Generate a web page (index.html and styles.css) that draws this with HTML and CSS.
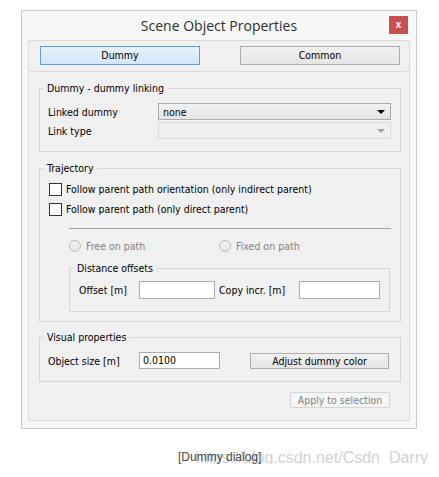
FILE: index.html
```html
<!DOCTYPE html>
<html>
<head>
<meta charset="utf-8">
<link rel="stylesheet" href="styles.css">
</head>
<body>
<div class="window">
  <div class="titlebar">
    <span></span>
    <div class="title">Scene Object Properties</div>
    <div class="close">x</div>
  </div>
  <div class="panel">
    <div class="tabs">
      <div class="btn tab active">Dummy</div>
      <div class="btn tab">Common</div>
    </div>
    <div class="content">
      <div class="group g1">
        <div class="gtitle">Dummy - dummy linking</div>
        <div class="row r17 first9"><span class="lbl w110">Linked dummy</span><div class="combo"><span>none</span><span class="arrow"></span></div></div>
        <div class="row r17 mt2"><span class="lbl w110">Link type</span><div class="combo disabled"><span></span><span class="arrow"></span></div></div>
      </div>

      <div class="group g2">
        <div class="gtitle">Trajectory</div>
        <div class="chk-row first5"><span class="chk"></span><span>Follow parent path orientation (only indirect parent)</span></div>
        <div class="chk-row"><span class="chk"></span><span>Follow parent path (only direct parent)</span></div>
        <div class="sep"></div>
        <div class="radio-row">
          <div class="radio-item"><span class="radio"></span><span>Free on path</span></div>
          <div class="radio-item"><span class="radio"></span><span>Fixed on path</span></div>
        </div>
        <div class="group g3">
          <div class="gtitle">Distance offsets</div>
          <div class="row r18 first7">
            <span class="lbl w60">Offset [m]</span>
            <div class="input w76"></div>
            <span class="lbl w80 ml4">Copy incr. [m]</span>
            <div class="input w81"></div>
          </div>
        </div>
      </div>

      <div class="group g4">
        <div class="gtitle">Visual properties</div>
        <div class="row r17 first9">
          <span class="lbl w91">Object size [m]</span>
          <div class="input w81">0.0100</div>
          <div class="btn adjust">Adjust dummy color</div>
        </div>
      </div>

      <div class="btn apply">Apply to selection</div>
    </div>
  </div>
</div>
<div class="caption"><span class="watermark">https://blog.csdn.net/Csdn_Darry</span><span class="captext">[Dummy dialog]</span></div>
</body>
</html>
```

FILE: styles.css
```css
* { box-sizing: border-box; }

body {
  margin: 0;
  background: #fff;
  font-family: "DejaVu Sans Condensed", "DejaVu Sans", sans-serif;
  font-stretch: condensed;
  font-size: 10.5px;
  color: #000;
}

.window {
  margin: 10px 0 0 21px;
  width: 396px;
  height: 419px;
  border: 1px solid #c9c9c9;
  background: #f7f7f7;
  display: flex;
  flex-direction: column;
}

.titlebar {
  height: 29px;
  flex: none;
  display: grid;
  grid-template-columns: 1fr auto 1fr;
  align-items: start;
}

.title {
  font-family: "Open Sans", sans-serif;
  font-stretch: normal;
  font-size: 14px;
  line-height: 29px;
  color: #2e2e2e;
  white-space: nowrap;
}

.close {
  justify-self: end;
  margin: 5px 8px 0 0;
  width: 19px;
  height: 18px;
  background: #c75050;
  color: #fff;
  font-family: "Liberation Sans", sans-serif;
  font-weight: bold;
  font-size: 10px;
  line-height: 17px;
  text-align: center;
}

.panel {
  flex: 1;
  margin: 0 6px 7px;
  border: 1px solid #dadada;
  background: #f0f0f0;
  display: flex;
  flex-direction: column;
}

.tabs {
  display: flex;
  justify-content: space-between;
  padding: 5px 9px 6px 11px;
  border-bottom: 1px solid #dcdcdc;
}

.btn {
  border: 1px solid #adadad;
  background: linear-gradient(#f0f0f0, #e5e5e5);
  text-align: center;
  line-height: 15px;
  white-space: nowrap;
}

.tab {
  width: 160px;
  height: 19px;
  line-height: 17px;
}

.tab.active {
  border-color: #5aa0e6;
  background: linear-gradient(#e7f1fc, #d2e6f9);
}

.content {
  padding: 0 8px 0 10px;
  display: flex;
  flex-direction: column;
}

.group {
  border: 1px solid #d5d5d5;
  padding: 0 9px 12px 8px;
}

.gtitle {
  margin: -7px 0 0 -5px;
  padding: 0 4px;
  width: fit-content;
  background: #f0f0f0;
  line-height: 12px;
  white-space: nowrap;
}

.g1 { margin-top: 16px; }
.g2 { margin-top: 16px; padding-bottom: 9px; }
.g3 { margin: 15px 1px 0 21px; padding-left: 9px; }
.g3 .gtitle { margin-left: -6px; }
.g4 { margin-top: 15px; }

.row {
  display: flex;
  align-items: center;
}
.r17 { height: 17px; }
.r18 { height: 18px; }
.first9 { margin-top: 9px; }
.first7 { margin-top: 7px; }
.first5 { margin-top: 5px; }
.mt2 { margin-top: 2px; }

.lbl { white-space: nowrap; flex: none; }
.w110 { width: 110px; }
.w60 { width: 60px; }
.w80 { width: 80px; }
.w91 { width: 91px; }
.ml4 { margin-left: 4px; }

.combo {
  flex: 1;
  height: 17px;
  border: 1px solid #acacac;
  background: linear-gradient(#f2f2f2, #e4e4e4);
  padding: 0 5px 0 4px;
  display: flex;
  align-items: center;
  justify-content: space-between;
}

.combo.disabled {
  border-color: #d9d9d9;
  background: #efefef;
}

.arrow {
  width: 0;
  height: 0;
  border-left: 4px solid transparent;
  border-right: 4px solid transparent;
  border-top: 4px solid #000;
  margin-top: 1px;
}

.combo.disabled .arrow { border-top-color: #a2a2a2; }

.chk-row {
  display: flex;
  align-items: center;
  height: 20px;
  white-space: nowrap;
}

.chk {
  width: 13px;
  height: 13px;
  border: 1px solid #333;
  background: #fff;
  margin: 0 4px 0 1px;
  flex: none;
}

.sep {
  margin: 9px 0 0 21px;
  height: 1px;
  background: #a0a0a0;
}

.radio-row {
  display: flex;
  align-items: center;
  height: 14px;
  margin: 10px 0 0 21px;
  color: #838383;
}

.radio-item {
  width: 150px;
  display: flex;
  align-items: center;
}

.radio {
  width: 12px;
  height: 12px;
  border-radius: 50%;
  border: 1px solid #bcbcbc;
  background: linear-gradient(#f4f4f4, #e6e6e6);
  margin-right: 5px;
  flex: none;
}

.input {
  height: 100%;
  border: 1px solid #abadb3;
  background: #fff;
  padding-left: 3px;
  line-height: 15px;
  flex: none;
}
.w76 { width: 76px; }
.w81 { width: 81px; }

.adjust {
  margin-left: 30px;
  width: 139px;
  height: 16px;
}

.apply {
  align-self: flex-end;
  margin: 10px 11px 0 0;
  width: 100px;
  height: 16px;
  line-height: 14px;
  border-color: #d5d5d5;
  background: #f4f4f4;
  color: #838383;
}

.caption {
  position: relative;
  margin-top: 21px;
  padding-left: 178px;
  font-family: "Liberation Sans", sans-serif;
  font-stretch: normal;
  font-size: 12px;
  line-height: 14px;
  color: #4a4a4a;
}

.captext { position: relative; }

.watermark {
  position: absolute;
  left: 195px;
  top: -2px;
  font-size: 16px;
  line-height: 20px;
  color: #d2d2d2;
  white-space: nowrap;
}
```
